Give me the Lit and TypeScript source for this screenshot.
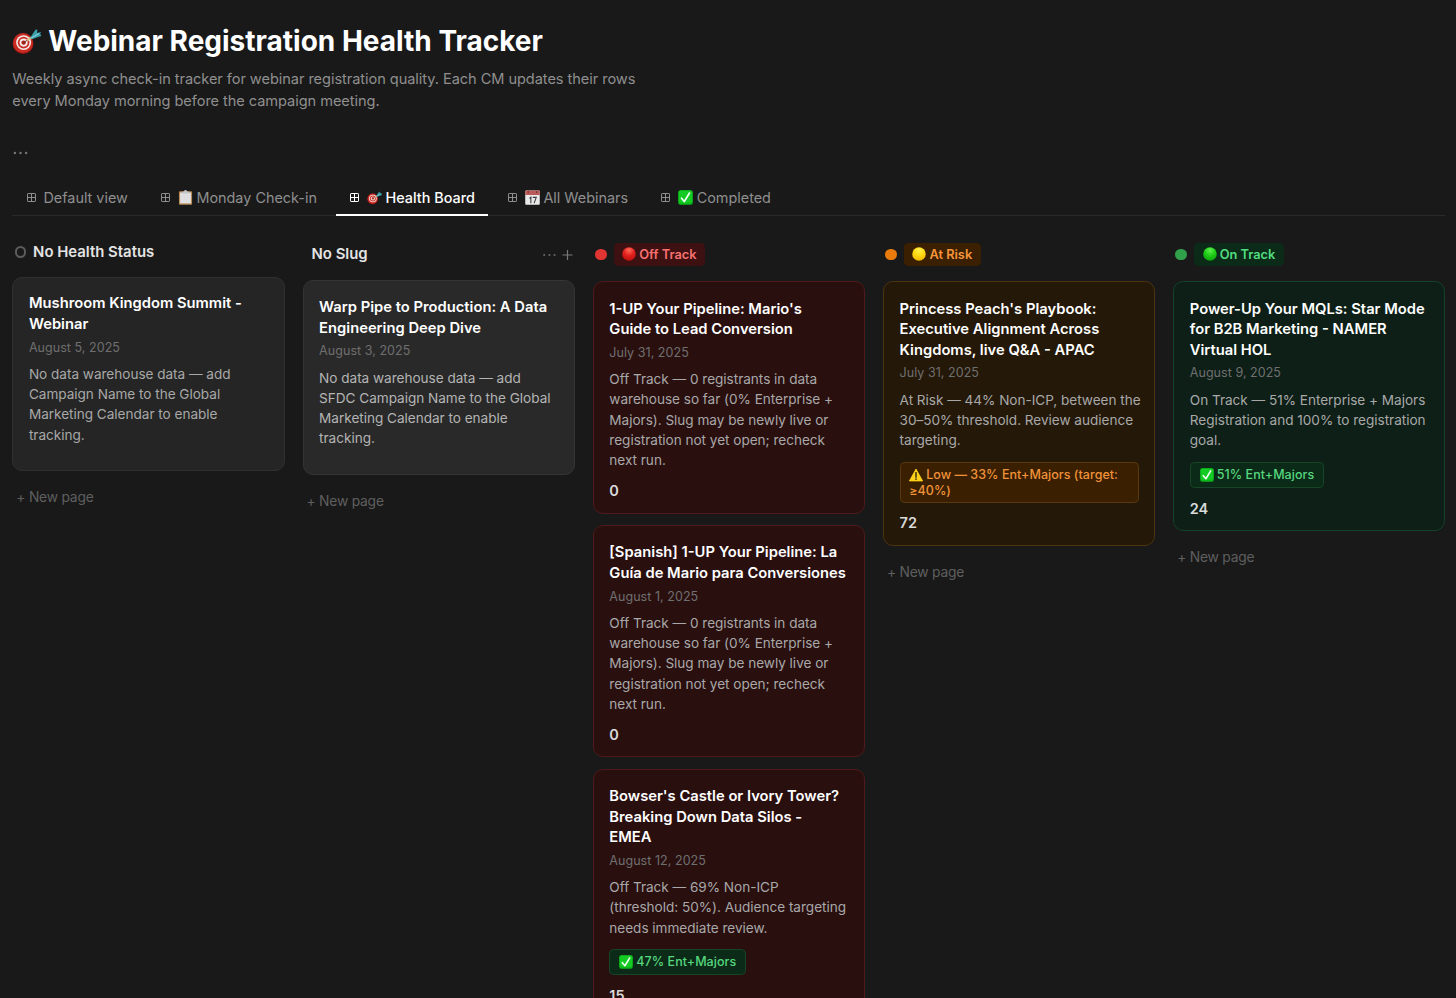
import { LitElement, html, css, svg, nothing } from "lit";
import { customElement, property } from "lit/decorators.js";

type Tone = "plain" | "slug" | "red" | "amber" | "green";

interface Card {
  title: string;
  date: string;
  note: string;
  badge?: { icon: string; text: string; tone: "amber" | "green" };
  count?: string;
}

interface Column {
  name: string;
  tone: Tone;
  icon?: string;
  cards: Card[];
}

const COLUMNS: Column[] = [
  {
    name: "No Health Status",
    tone: "plain",
    cards: [
      {
        title: "Mushroom Kingdom Summit -\nWebinar",
        date: "August 5, 2025",
        note: "No data warehouse data — add\nCampaign Name to the Global\nMarketing Calendar to enable\ntracking.",
      },
    ],
  },
  {
    name: "No Slug",
    tone: "slug",
    cards: [
      {
        title: "Warp Pipe to Production: A Data\nEngineering Deep Dive",
        date: "August 3, 2025",
        note: "No data warehouse data — add\nSFDC Campaign Name to the Global\nMarketing Calendar to enable\ntracking.",
      },
    ],
  },
  {
    name: "Off Track",
    tone: "red",
    icon: "redBall",
    cards: [
      {
        title: "1-UP Your Pipeline: Mario's\nGuide to Lead Conversion",
        date: "July 31, 2025",
        note: "Off Track — 0 registrants in data\nwarehouse so far (0% Enterprise +\nMajors). Slug may be newly live or\nregistration not yet open; recheck\nnext run.",
        count: "0",
      },
      {
        title: "[Spanish] 1-UP Your Pipeline: La\nGuía de Mario para Conversiones",
        date: "August 1, 2025",
        note: "Off Track — 0 registrants in data\nwarehouse so far (0% Enterprise +\nMajors). Slug may be newly live or\nregistration not yet open; recheck\nnext run.",
        count: "0",
      },
      {
        title: "Bowser's Castle or Ivory Tower?\nBreaking Down Data Silos -\nEMEA",
        date: "August 12, 2025",
        note: "Off Track — 69% Non-ICP\n(threshold: 50%). Audience targeting\nneeds immediate review.",
        badge: { icon: "check", text: "47% Ent+Majors", tone: "green" },
        count: "15",
      },
    ],
  },
  {
    name: "At Risk",
    tone: "amber",
    icon: "yellowBall",
    cards: [
      {
        title: "Princess Peach's Playbook:\nExecutive Alignment Across\nKingdoms, live Q&A - APAC",
        date: "July 31, 2025",
        note: "At Risk — 44% Non-ICP, between the\n30–50% threshold. Review audience\ntargeting.",
        badge: { icon: "warning", text: "Low — 33% Ent+Majors (target:\n≥40%)", tone: "amber" },
        count: "72",
      },
    ],
  },
  {
    name: "On Track",
    tone: "green",
    icon: "greenBall",
    cards: [
      {
        title: "Power-Up Your MQLs: Star Mode\nfor B2B Marketing - NAMER\nVirtual HOL",
        date: "August 9, 2025",
        note: "On Track — 51% Enterprise + Majors\nRegistration and 100% to registration\ngoal.",
        badge: { icon: "check", text: "51% Ent+Majors", tone: "green" },
        count: "24",
      },
    ],
  },
];

const TABS = [
  { label: "Default view", icon: "" },
  { label: "Monday Check-in", icon: "clipboard" },
  { label: "Health Board", icon: "target", active: true },
  { label: "All Webinars", icon: "calendar" },
  { label: "Completed", icon: "check" },
];

const ball = (id: string, top: string, mid: string, edge: string) => svg`
  <defs><radialGradient id=${id} cx="50%" cy="22%" r="80%">
    <stop offset="0" stop-color=${top}></stop><stop offset=".5" stop-color=${mid}></stop><stop offset="1" stop-color=${edge}></stop>
  </radialGradient></defs>
  <circle cx="16" cy="16" r="15.5" fill="url(#${id})"></circle>`;

const GLYPHS: Record<string, unknown> = {
  target: svg`
    <ellipse cx="12" cy="19.300" rx="11.300" ry="11.200" fill="#8f1713"></ellipse>
    <circle cx="12" cy="18.500" r="10.800" fill="#cb2a22"></circle>
    <circle cx="12.600" cy="18" r="8.100" fill="#f3e9e6"></circle>
    <circle cx="12.600" cy="18" r="6.300" fill="#cb2a22"></circle>
    <circle cx="12.600" cy="18" r="4.400" fill="#f3e9e6"></circle>
    <circle cx="12.600" cy="18" r="2.400" fill="#a8231c"></circle>
    <path d="M12.600 18 18 14.500" stroke="#6b2a22" stroke-width="1" fill="none"></path>
    <path d="M16.500 15.500 22 12" stroke="#d8c98e" stroke-width="2.200" fill="none"></path>
    <path d="M19.500 13.300 22.500 8.500 25.500 4.200 27.500 3.800 27.200 7.500 31.500 6.500 30.500 8.800 32 10.800 27.500 12.300 22.500 14Z" fill="#3b9fac"></path>
    <path d="M21 13 29.500 8" stroke="#8bd3d8" stroke-width="1.200" fill="none"></path>`,
  check: svg`
    <rect x="0.5" y="0.5" width="31" height="31" rx="4.5" fill="#0cb51a"></rect>
    <rect x="1.5" y="1" width="29" height="26" rx="4" fill="#13cb22"></rect>
    <path d="M7.500 17.5 13.500 24.500 24.500 6.5" stroke="#f4fff4" stroke-width="3.600" fill="none" stroke-linecap="round" stroke-linejoin="round"></path>`,
  clipboard: svg`
    <rect x="2" y="2.5" width="28" height="29" rx="2" fill="#b58a55"></rect>
    <rect x="4.5" y="5.5" width="23" height="23" fill="#e4e4e6"></rect>
    <path d="M7 12h18M7 16h18M7 20h18M7 24h18" stroke="#cfcfd3" stroke-width="1"></path>
    <path d="M9 3h4a3 3 0 0 1 6 0h4v5H9z" fill="#c3c6ca"></path>`,
  calendar: svg`
    <rect x="0.5" y="1" width="31" height="30.5" rx="2" fill="#e9e9e9"></rect>
    <path d="M.5 3a2 2 0 0 1 2-2h27a2 2 0 0 1 2 2v7.500h-31z" fill="#b95a59"></path>
    <circle cx="7" cy="4.500" r="1.600" fill="#5d2c2c"></circle><circle cx="25" cy="4.500" r="1.600" fill="#5d2c2c"></circle>
    <path d="M9.500 18 12.500 15.500V28M16.500 15.800H24L19.500 28" stroke="#3a3a3a" stroke-width="2.300" fill="none"></path>`,
  warning: svg`
    <path d="M16 2.500 31 29.500H1z" fill="#ffd21a" stroke="#ffd21a" stroke-width="2" stroke-linejoin="round"></path>
    <path d="M16 10.500V21" stroke="#2b2410" stroke-width="3.200" stroke-linecap="round"></path>
    <circle cx="16" cy="25.500" r="1.900" fill="#2b2410"></circle>`,
  redBall: ball("rb", "#ff6a5a", "#e3221c", "#b80f0f"),
  yellowBall: ball("yb", "#fff04a", "#ffd912", "#f0b400"),
  greenBall: ball("gb", "#5df04c", "#1fcb18", "#0ba00c"),
};

@customElement("emoji-glyph")
class EmojiGlyph extends LitElement {
  @property() name = "";
  static styles = css`
    :host { display: inline-block; flex: none; }
    .art { display: block; width: 100%; height: 100%; overflow: visible; }
  `;
  render() {
    return html`<svg class="art" viewBox="0 0 32 32">${GLYPHS[this.name]}</svg>`;
  }
}

@customElement("board-card")
class BoardCard extends LitElement {
  @property({ attribute: false }) card!: Card;
  @property() tone: Tone = "plain";
  static styles = css`
    :host { display: block; min-width: 0; }
    .card {
      box-sizing: border-box; border: 1px solid #303030; border-radius: 10px;
      background: #252525; padding: 15.800px 15px 11.800px 15.600px;
    }
    .slug { background: #292929; border-color: #343434; }
    .red { background: #2a0f0f; border-color: #4f1a1b; }
    .amber { background: #241808; border-color: #4d340f; }
    .green { background: #0d1f17; border-color: #15402a; }
    .card.red, .card.amber, .card.green { padding-top: 16.300px; padding-bottom: 11.300px; }
    .title { font-size: 14.750px; font-weight: 600; line-height: 20.600px; color: #fff; white-space: pre; }
    .date { margin-top: 4px; font-size: 12.500px; line-height: 18px; color: #6f6f6f; letter-spacing: .05px; white-space: pre; }
    .note { margin-top: 7.200px; font-size: 13.600px; line-height: 20.300px; color: #a8a8a8; letter-spacing: -.03px; white-space: pre; }
    .slug .note { color: #b4b4b4; }
    .badge {
      display: block; width: fit-content; box-sizing: border-box; margin-top: 11px; padding: 4.200px 9px;
      border: 1px solid; border-radius: 4.500px; font-size: 12.500px; font-weight: 500; line-height: 16.200px; letter-spacing: .04px; white-space: pre;
    }
    .badge.green { background: #0b2a17; border-color: #164527; color: #56d67f; }
    .badge.amber { background: #3a2000; border-color: #59380d; color: #f0923a; width: 100%; padding: 4.400px 8.600px 2.300px; }
    .mark { width: 14px; height: 14px; vertical-align: -.900px; margin: -2px 3px -2px 0; }
    .count { margin-top: 10.700px; font-size: 14.500px; font-weight: 600; line-height: 20px; color: #dadada; }
    .spacer { height: 13px; }
  `;
  render() {
    const c = this.card;
    return html`<article class="card ${this.tone}">
      <div class="title">${c.title}</div>
      <div class="date">${c.date}</div>
      <div class="note">${c.note}</div>
      ${c.badge
        ? html`<div class="badge ${c.badge.tone}"><emoji-glyph class="mark" name=${c.badge.icon}></emoji-glyph>${c.badge.text}</div>`
        : nothing}
      ${c.count ? html`<div class="count">${c.count}</div>` : html`<div class="spacer"></div>`}
    </article>`;
  }
}

@customElement("board-column")
class BoardColumn extends LitElement {
  @property({ attribute: false }) column!: Column;
  static styles = css`
    :host { display: block; min-width: 0; }
    .head { display: flex; align-items: center; height: 24px; margin-bottom: 15px; }
    .head.plain { height: 19px; margin-bottom: 15.300px; padding-left: 2.300px; }
    .head.slug { padding-left: 9px; margin-bottom: 14px; padding-right: 2px; }
    .head.red, .head.amber, .head.green { padding-left: 2.300px; }
    .name { font-size: 14.900px; font-weight: 600; color: #e4e4e4; line-height: 19px; padding-top: 1px; }
    .ring { box-sizing: border-box; width: 11.500px; height: 11.500px; border: 2px solid #5c5c5c; border-radius: 50%; margin-right: 7px; }
    .dot { width: 11.500px; height: 11.500px; border-radius: 50%; margin-right: 7px; flex: none; }
    .plain .name { padding-top: 1.800px; }
    .red .dot { background: #e03533; }
    .amber .dot { background: #e87b0c; }
    .green .dot { background: #31a04a; }
    .pill { display: flex; align-items: center; height: 23px; padding: 0 9px 0 8.700px; border-radius: 4.500px; font-size: 12.800px; font-weight: 600; }
    .red .pill { background: #3d1011; color: #f7716f; }
    .amber .pill { background: #3a2000; color: #f7953c; }
    .green .pill { background: #0b2a17; color: #51dc80; }
    .mark { width: 14px; height: 14px; margin-right: 3px; }
    .tools { margin-left: auto; display: block; width: 31px; height: 12px; }
    .stack { display: grid; grid-template-columns: minmax(0, 1fr); gap: 11.500px; }
    .add { margin: 16.300px 0 0 4px; font-size: 13.800px; line-height: 20px; letter-spacing: -.2px; color: #5f5f5f; white-space: pre; }
  `;
  render() {
    const c = this.column;
    return html`
      <header class="head ${c.tone}">
        ${c.tone === "plain" ? html`<span class="ring"></span>` : nothing}
        ${c.icon
          ? html`<span class="dot"></span><span class="pill"><emoji-glyph class="mark" name=${c.icon}></emoji-glyph>${c.name}</span>`
          : html`<span class="name">${c.name}</span>`}
        ${c.tone === "slug"
          ? html`<svg class="tools" viewBox="0 0 31 12">
              <g fill="#6a6a6a"><circle cx="2.200" cy="7" r="1.050"></circle><circle cx="7.500" cy="7" r="1.050"></circle><circle cx="12.500" cy="7" r="1.050"></circle></g>
              <path d="M25.500 2v10M20.500 7h10" stroke="#777" stroke-width="1.200"></path></svg>`
          : nothing}
      </header>
      <div class="stack">${c.cards.map((k) => html`<board-card .card=${k} tone=${c.tone}></board-card>`)}</div>
      <div class="add">+ New page</div>
    `;
  }
}

@customElement("app-root")
class AppRoot extends LitElement {
  static styles = css`
    :host {
      display: block; box-sizing: border-box; width: 100%; height: 998px; overflow: hidden;
      background: #191919; color: #fff; font-family: Inter, "Noto Sans", sans-serif; padding: 23px 10.600px 0 12.300px;
    }
    .heading { display: flex; align-items: center; height: 36px; margin: 0; font-size: 28px; font-weight: 700; white-space: pre; }
    .bullseye { width: 29.500px; height: 29.500px; margin-right: 6.500px; }
    .intro { margin: 9px 0 0; font-size: 14.600px; line-height: 22px; color: #8f8f8f; white-space: pre; letter-spacing: -.065px; }
    .more { display: block; width: 17px; height: 4px; margin-top: 39px; }
    .tabs { display: flex; gap: 5px; height: 61px; align-items: flex-end; border-bottom: 1px solid #2a2a2a; box-sizing: border-box; }
    .tab { display: flex; align-items: center; box-sizing: border-box; height: 36px; padding: 0 13.600px 0 14.300px; font-size: 14.420px; color: #8f8f8f; border-bottom: 2px solid transparent; margin-bottom: -1px; white-space: pre; }
    .tab.active { color: #fff; border-color: #fff; font-weight: 500; }
    .grid { width: 9px; height: 9px; margin: 1px 7.800px 0 0; flex: none; }
    .mark { width: 15px; height: 15px; margin-right: 3.800px; }
    .board { display: grid; grid-template-columns: repeat(5, minmax(0, 1fr)); gap: 18px; padding-top: 26.400px; align-items: start; }
  `;
  render() {
    return html`
      <h1 class="heading"><emoji-glyph class="bullseye" name="target"></emoji-glyph>Webinar Registration Health Tracker</h1>
      <p class="intro">${"Weekly async check-in tracker for webinar registration quality. Each CM updates their rows\nevery Monday morning before the campaign meeting."}</p>
      <svg class="more" viewBox="0 0 17 4" fill="#777"><circle cx="2.900" cy="2" r="1.200"></circle><circle cx="8.500" cy="2" r="1.200"></circle><circle cx="14.100" cy="2" r="1.200"></circle></svg>
      <nav class="tabs">
        ${TABS.map(
          (t) => html`<div class="tab ${t.active ? "active" : ""}">
            <svg class="grid" viewBox="0 0 9 9" fill="none" stroke="currentColor" stroke-width="1"><rect x=".5" y=".5" width="8" height="8" rx=".6"></rect><path d="M4.500 .5v8M.5 4.500h8"></path></svg>${t.icon
              ? html`<emoji-glyph class="mark" name=${t.icon}></emoji-glyph>`
              : nothing}<span>${t.label}</span></div>`,
        )}
      </nav>
      <main class="board">${COLUMNS.map((c) => html`<board-column .column=${c}></board-column>`)}</main>
    `;
  }
}
